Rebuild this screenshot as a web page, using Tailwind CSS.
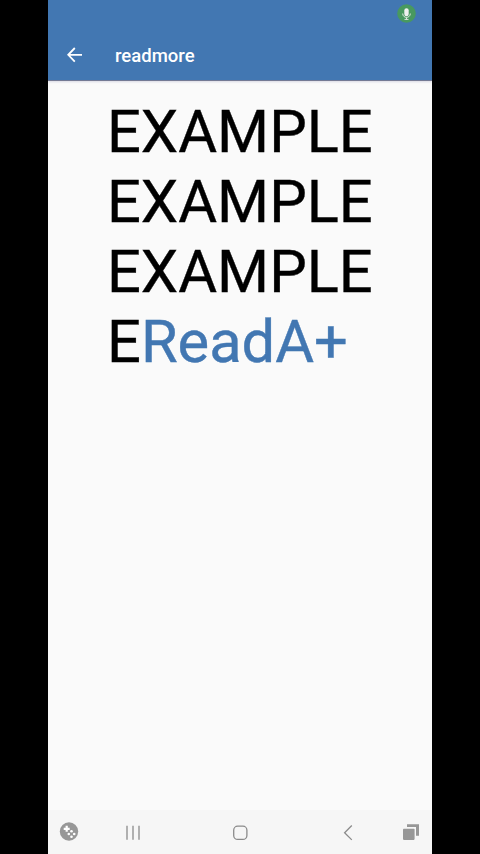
<!DOCTYPE html>
<html lang="en">
<head>
<meta charset="utf-8">
<title>readmore</title>
<script src="https://cdn.jsdelivr.net/npm/@tailwindcss/browser@4"></script>
</head>
<body class="bg-black font-['Roboto',sans-serif]">
<div class="mx-auto flex h-[854px] w-[384px] flex-col overflow-hidden bg-[#fafafa]">
  <header class="flex h-[81px] shrink-0 flex-col border-b border-[#747a94] bg-[#4277b2] shadow-[0_1px_2px_rgba(90,90,140,0.2)]">
    <div class="flex h-[30px] justify-end pr-4 pt-1">
      <svg class="size-[19px]" viewBox="0 0 19 19" fill="none">
        <circle cx="9.5" cy="9.5" r="9.3" fill="#48995f"/>
        <rect x="7.3" y="4.2" width="4.4" height="8" rx="2.2" fill="#f0f0f0"/>
        <path d="M5.7 9.5c0 5.2 7.6 5.2 7.6 0M9.5 13.4v2.2M7.5 15.4h4" stroke="#dce5df" stroke-width="1"/>
      </svg>
    </div>
    <div class="flex h-[50px] items-center pl-[19px]">
      <svg class="h-4 w-4 shrink-0" viewBox="0 0 16 16" fill="none" stroke="#fff" stroke-width="1.8">
        <path d="M7.8 1 1.2 7.8l6.6 6.8M1.2 7.8H15"/>
      </svg>
      <h1 class="ml-8 pt-[2px] text-[18.5px] leading-6 font-medium text-white">readmore</h1>
    </div>
  </header>
  <main class="flex-1 pl-[59px] pt-[16px] text-[59.6px] leading-[70px] text-black [-webkit-text-stroke:0.4px_currentColor]">
    <p>EXAMPLE</p>
    <p>EXAMPLE</p>
    <p>EXAMPLE</p>
    <p>E<span class="text-[#4277b2]">ReadA+</span></p>
  </main>
  <nav class="flex h-[44px] shrink-0 items-center bg-[#f6f6f6]">
    <svg class="h-[44px] w-[384px]" viewBox="0 0 384 44" fill="none">
      <circle cx="21" cy="21.5" r="9.2" fill="#979797"/>
      <path d="M18.7 15.8v6M15.7 18.8h6" stroke="#fff" stroke-width="2.2"/>
      <g fill="#fff"><circle cx="23.5" cy="21.3" r="1.3"/><circle cx="20.8" cy="24" r="1.3"/><circle cx="26.2" cy="24" r="1.3"/><circle cx="23.5" cy="26.7" r="1.3"/></g>
      <path d="M79 15.8v14M85 15.8v14M91 15.8v14" stroke="#8b8b8b" stroke-width="1.3"/>
      <rect x="185.7" y="16.2" width="13.2" height="13.2" rx="4" stroke="#8b8b8b" stroke-width="1.3"/>
      <path d="m303.8 15.5-7.2 7.2 7.2 7.2" stroke="#8b8b8b" stroke-width="1.3"/>
      <path d="M359 14.2h12v11.5h-3V17h-9z" fill="#979797"/>
      <rect x="355" y="18.7" width="11.6" height="11.2" rx="0.8" fill="#979797"/>
    </svg>
  </nav>
</div>
</body>
</html>
